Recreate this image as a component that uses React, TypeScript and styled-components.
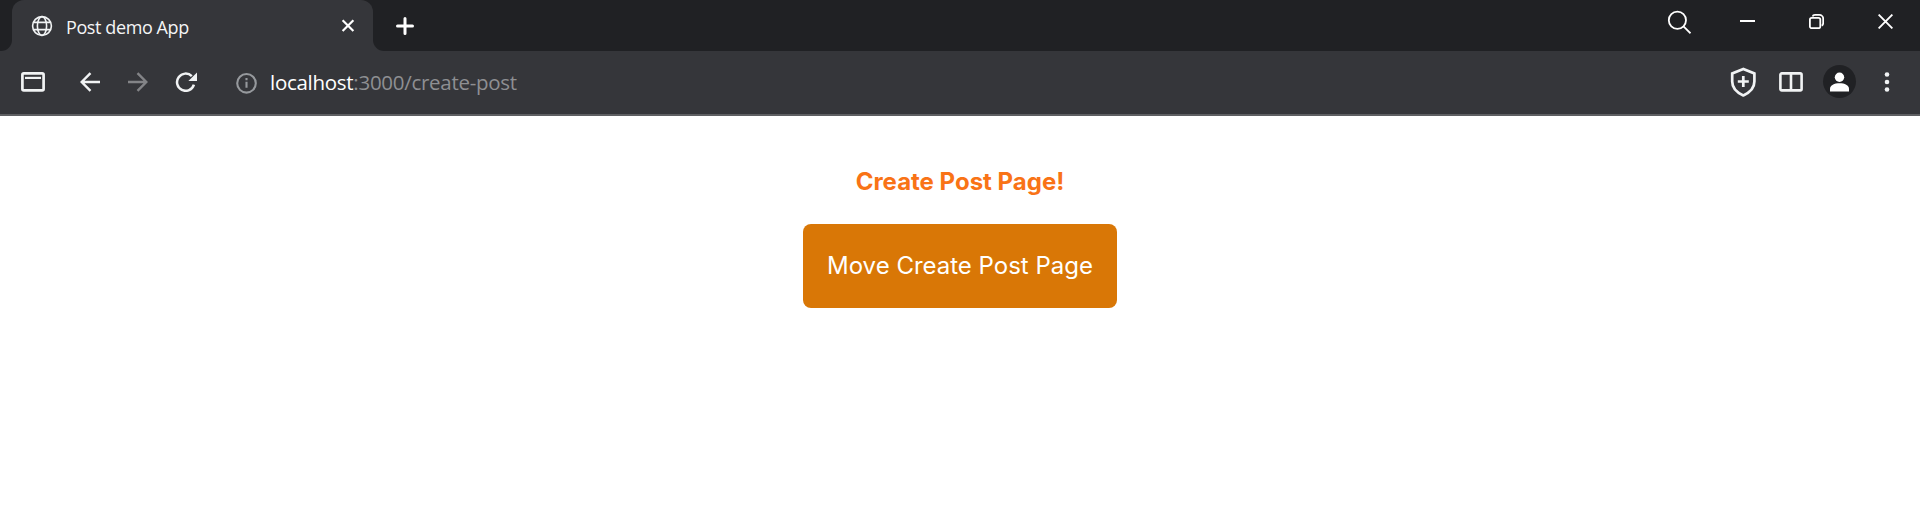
import React from "react";
import styled, { createGlobalStyle } from "styled-components";

const GlobalStyle = createGlobalStyle`
  *, *::before, *::after { box-sizing: border-box; }
  body { margin: 0; background: #fff; }
`;

const uiFont = `"Segoe UI", "Open Sans", "Noto Sans", sans-serif`;

const Window = styled.div`
  display: flex;
  flex-direction: column;
  height: 527px;
  overflow: hidden;
`;

const TabStrip = styled.header`
  display: flex;
  height: 51px;
  background: #35363a;
`;

const StripEdge = styled.div`
  width: 12px;
  background: #202124;
  border-bottom-right-radius: 11px;
`;

const TabWell = styled.div`
  width: 361px;
  background: #202124;
`;

const Tab = styled.div`
  display: flex;
  align-items: center;
  height: 51px;
  padding: 0 18px 0 19px;
  background: #35363a;
  border-radius: 12px 12px 0 0;
`;

const TabTitle = styled.span`
  flex: 1;
  margin-left: 13px;
  padding-top: 2px;
  color: #f4f5f6;
  font: 400 18px/24px ${uiFont};
  letter-spacing: -0.4px;
  white-space: nowrap;
`;

const StripRest = styled.div`
  display: flex;
  flex: 1;
  justify-content: space-between;
  background: #202124;
  border-bottom-left-radius: 11px;
`;

const NewTab = styled.button`
  display: flex;
  align-items: center;
  justify-content: center;
  width: 64px;
  height: 51px;
  padding: 0;
  border: 0;
  background: none;
`;

const WindowControls = styled.div`
  display: flex;
`;

const ControlButton = styled.button`
  display: flex;
  align-items: center;
  justify-content: center;
  width: 69px;
  height: 43px;
  padding: 0;
  border: 0;
  background: none;
`;

const Toolbar = styled.nav`
  display: flex;
  align-items: center;
  height: 65px;
  padding: 0 9px 2px 9px;
  background: #35363a;
  border-bottom: 2px solid #5e5f62;
`;

const ToolButton = styled.button<{ $gap?: number }>`
  display: flex;
  align-items: center;
  justify-content: center;
  width: 48px;
  height: 48px;
  margin-right: ${(p) => p.$gap ?? 0}px;
  padding: 0;
  border: 0;
  background: none;
`;

const Address = styled.div`
  display: flex;
  flex: 1;
  align-items: center;
  padding-left: 26px;
`;

const Url = styled.span`
  margin-left: 12px;
  color: #8e8f92;
  font: 400 20.5px/28px ${uiFont};
  letter-spacing: -0.28px;
  white-space: nowrap;
`;

const Host = styled.span`
  color: #fff;
`;

const Avatar = styled.span`
  display: flex;
  align-items: center;
  justify-content: center;
  width: 33px;
  height: 33px;
  border-radius: 50%;
  background: #202124;
`;

const Page = styled.main`
  display: flex;
  flex: 1;
  flex-direction: column;
  align-items: center;
  padding-top: 48px;
  background: #fff;
  font-family: Inter, sans-serif;
`;

const Heading = styled.h1`
  margin: 0 0 24px;
  color: #f97316;
  font-size: 24px;
  font-weight: 700;
  line-height: 36px;
`;

const PostButton = styled.button`
  width: 314px;
  height: 84px;
  padding: 0;
  border: 0;
  border-radius: 8px;
  background: #d97706;
  color: #fff;
  font: 400 24px/36px Inter, sans-serif;
  white-space: nowrap;
`;

type IconProps = {
  w: number;
  h: number;
  color?: string;
  stroke?: number;
  children: React.ReactNode;
};

const Svg = styled.svg`
  display: block;
  flex: none;
`;

const Icon = ({ w, h, color = "#f1f3f4", stroke = 2, children }: IconProps) => (
  <Svg width={w} height={h} viewBox={`0 0 ${w} ${h}`} fill="none" stroke={color} strokeWidth={stroke}>
    {children}
  </Svg>
);

export default function App() {
  return (
    <>
      <GlobalStyle />
      <Window>
        <TabStrip>
          <StripEdge />
          <TabWell>
            <Tab>
              <Icon w={22} h={22} stroke={1.6}>
                <circle cx="11" cy="11" r="9.4" />
                <ellipse cx="11" cy="11" rx="4.6" ry="9.4" />
                <path d="M2.4 7.4h17.2M2.4 14.6h17.2" />
              </Icon>
              <TabTitle>Post demo App</TabTitle>
              <Icon w={14} h={14} color="#fff" stroke={2.2}>
                <path d="M1.6 1.2l10.8 10.8M12.4 1.2L1.6 12" />
              </Icon>
            </Tab>
          </TabWell>
          <StripRest>
            <NewTab aria-label="New tab">
              <Icon w={18} h={18} color="#fff" stroke={3}>
                <path d="M9 1.5v15M1.5 9h15" strokeLinecap="round" />
              </Icon>
            </NewTab>
            <WindowControls>
              <ControlButton aria-label="Search tabs">
                <Icon w={25} h={25} color="#fff" stroke={1.8}>
                  <circle cx="11.4" cy="11.2" r="8.6" />
                  <path d="M17.5 17.3l7 7" />
                </Icon>
              </ControlButton>
              <ControlButton aria-label="Minimize">
                <Icon w={15} h={15} color="#fff">
                  <path d="M0 7h15" />
                </Icon>
              </ControlButton>
              <ControlButton aria-label="Restore">
                <Icon w={15} h={15} color="#fff" stroke={1.8}>
                  <rect x="0.9" y="3.8" width="10.4" height="10.4" rx="1.8" />
                  <path d="M3.6 2.4Q4 .9 6 .9h4.4a3.8 3.8 0 013.8 3.8V9q0 2-1.5 2.6" />
                </Icon>
              </ControlButton>
              <ControlButton aria-label="Close">
                <Icon w={15} h={15} color="#fff" stroke={1.9}>
                  <path d="M.6.6l13.8 13.8M14.4.6L.6 14.4" />
                </Icon>
              </ControlButton>
            </WindowControls>
          </StripRest>
        </TabStrip>
        <Toolbar>
          <ToolButton $gap={9} aria-label="Panel">
            <Icon w={24} h={20} stroke={2.7}>
              <rect x="1.4" y="1.4" width="21.2" height="17" rx="1.4" />
              <path d="M4 5.9h16" strokeWidth="2.2" />
            </Icon>
          </ToolButton>
          <ToolButton aria-label="Back">
            <Icon w={20} h={20} stroke={2.4}>
              <path d="M20 10H2M10.5 1.2L1.7 10l8.8 8.8" />
            </Icon>
          </ToolButton>
          <ToolButton aria-label="Forward">
            <Icon w={20} h={20} color="#838487" stroke={2.4}>
              <path d="M0 10h18M9.5 1.2l8.8 8.8-8.8 8.8" />
            </Icon>
          </ToolButton>
          <ToolButton aria-label="Reload">
            <Icon w={22} h={20} stroke={2.5}>
              <path d="M18.9 12.6A8.6 8.6 0 1116.8 4.2" />
              <path d="M22 .4v8.6h-8.6z" fill="#f1f3f4" stroke="none" />
            </Icon>
          </ToolButton>
          <Address>
            <Icon w={22} h={24} color="#96999d" stroke={2.1}>
              <circle cx="10.5" cy="13.3" r="9.3" />
              <path d="M10.5 11.8v6M10.5 8.1v2.2" />
            </Icon>
            <Url>
              <Host>localhost</Host>:3000/create-post
            </Url>
          </Address>
          <ToolButton aria-label="Shield">
            <Icon w={26} h={30} stroke={2.7}>
              <path d="M13.3 2L2.2 6.4v8.2c0 6 4.5 11 11.1 13.8 6.6-2.8 11.1-7.8 11.1-13.8V6.4z" />
              <path d="M13.3 9v11M7.8 14.5h11" />
            </Icon>
          </ToolButton>
          <ToolButton aria-label="Side panel">
            <Icon w={24} h={20} stroke={2.6}>
              <rect x="1.4" y="1.4" width="21.2" height="17" rx="1.4" />
              <path d="M12 2v16" />
            </Icon>
          </ToolButton>
          <ToolButton aria-label="Profile">
            <Avatar>
              <Icon w={19} h={20} color="none">
                <circle cx="9.5" cy="5.2" r="4.7" fill="#fff" />
                <path d="M0 19.5v-2.6c0-3.6 4.3-5.6 9.5-5.6s9.5 2 9.5 5.6v2.6z" fill="#fff" />
              </Icon>
            </Avatar>
          </ToolButton>
          <ToolButton aria-label="Menu">
            <Icon w={6} h={20} color="none">
              <circle cx="3" cy="2.5" r="2.3" fill="#f1f3f4" />
              <circle cx="3" cy="10" r="2.3" fill="#f1f3f4" />
              <circle cx="3" cy="17.5" r="2.3" fill="#f1f3f4" />
            </Icon>
          </ToolButton>
        </Toolbar>
        <Page>
          <Heading>Create Post Page!</Heading>
          <PostButton>Move Create Post Page</PostButton>
        </Page>
      </Window>
    </>
  );
}
